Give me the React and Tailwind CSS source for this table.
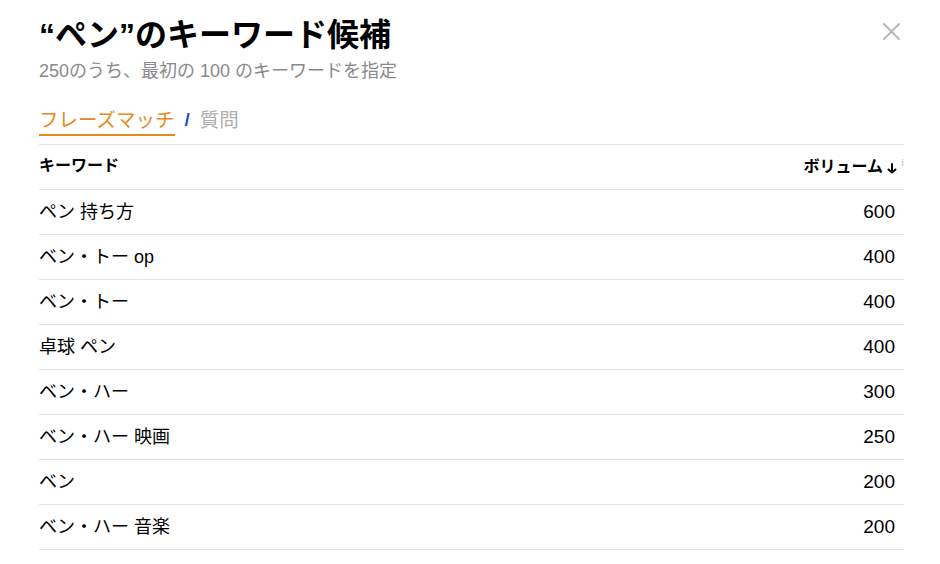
import React from "react";

const rows = [
  ["ペン 持ち方", "600"],
  ["ベン・トー op", "400"],
  ["ベン・トー", "400"],
  ["卓球 ペン", "400"],
  ["ベン・ハー", "300"],
  ["ベン・ハー 映画", "250"],
  ["ベン", "200"],
  ["ベン・ハー 音楽", "200"],
];

const font = { fontFamily: '"Liberation Sans", "Noto Sans CJK JP", sans-serif' };

export default function App() {
  return (
    <div className="w-[940px] h-[564px] bg-white overflow-hidden text-black" style={font}>
      <div className="pl-[39px] pr-[36px] pt-[14px]">
        <div className="flex items-start justify-between">
          <h1 className="text-[32px] leading-[42px] font-bold">“ペン”のキーワード候補</h1>
          <button className="mt-[8px] mr-[3px] text-[#b8b8b8]">
            <svg width="19" height="19" viewBox="0 0 19 19" fill="none" stroke="currentColor" strokeWidth="2" strokeLinecap="round">
              <path d="M2 2 L17 17 M17 2 L2 17" />
            </svg>
          </button>
        </div>
        <p className="text-[18px] leading-[24px] text-[#8a8a8a] mt-[3px]">250のうち、最初の 100 のキーワードを指定</p>
        <div className="flex items-end gap-[10px] mt-[23px] h-[30px]">
          <div className="text-[19.5px] leading-[26px] text-[#e8891c] border-b-2 border-[#e8891c] pb-[1px]">フレーズマッチ</div>
          <div className="text-[19px] leading-[26px] text-[#2453c4] font-bold pb-[3px]">/</div>
          <div className="text-[19.5px] leading-[26px] text-[#b0b0b0] pb-[3px]">質問</div>
        </div>
        <div className="mt-[8px] border-t border-[#e3e3e3]">
          <div className="flex items-center justify-between h-[45px] border-b border-[#e3e3e3]">
            <span className="text-[16px] font-bold -mt-[3px]">キーワード</span>
            <span className="flex items-center text-[16px] font-bold">
              ボリューム
              <svg className="ml-[4px] mt-[3px]" width="10" height="11" viewBox="0 0 10 11" fill="none" stroke="black" strokeWidth="2" strokeLinecap="round" strokeLinejoin="round">
                <path d="M5 1 V9.5 M1.5 6.5 L5 9.5 L8.5 6.5" />
              </svg>
              <span className="ml-[4px] text-[11px] leading-[11px] text-[#bdbdbd] font-normal -mt-[9px]" style={{ fontFamily: '"Liberation Serif", serif' }}>i</span>
            </span>
          </div>
          {rows.map(([k, v], i) => (
            <div key={i} className="flex items-center justify-between h-[45px] border-b border-[#e3e3e3]">
              <span className="text-[18px]">{k}</span>
              <span className="text-[19px] pr-[9px]">{v}</span>
            </div>
          ))}
        </div>
      </div>
    </div>
  );
}
